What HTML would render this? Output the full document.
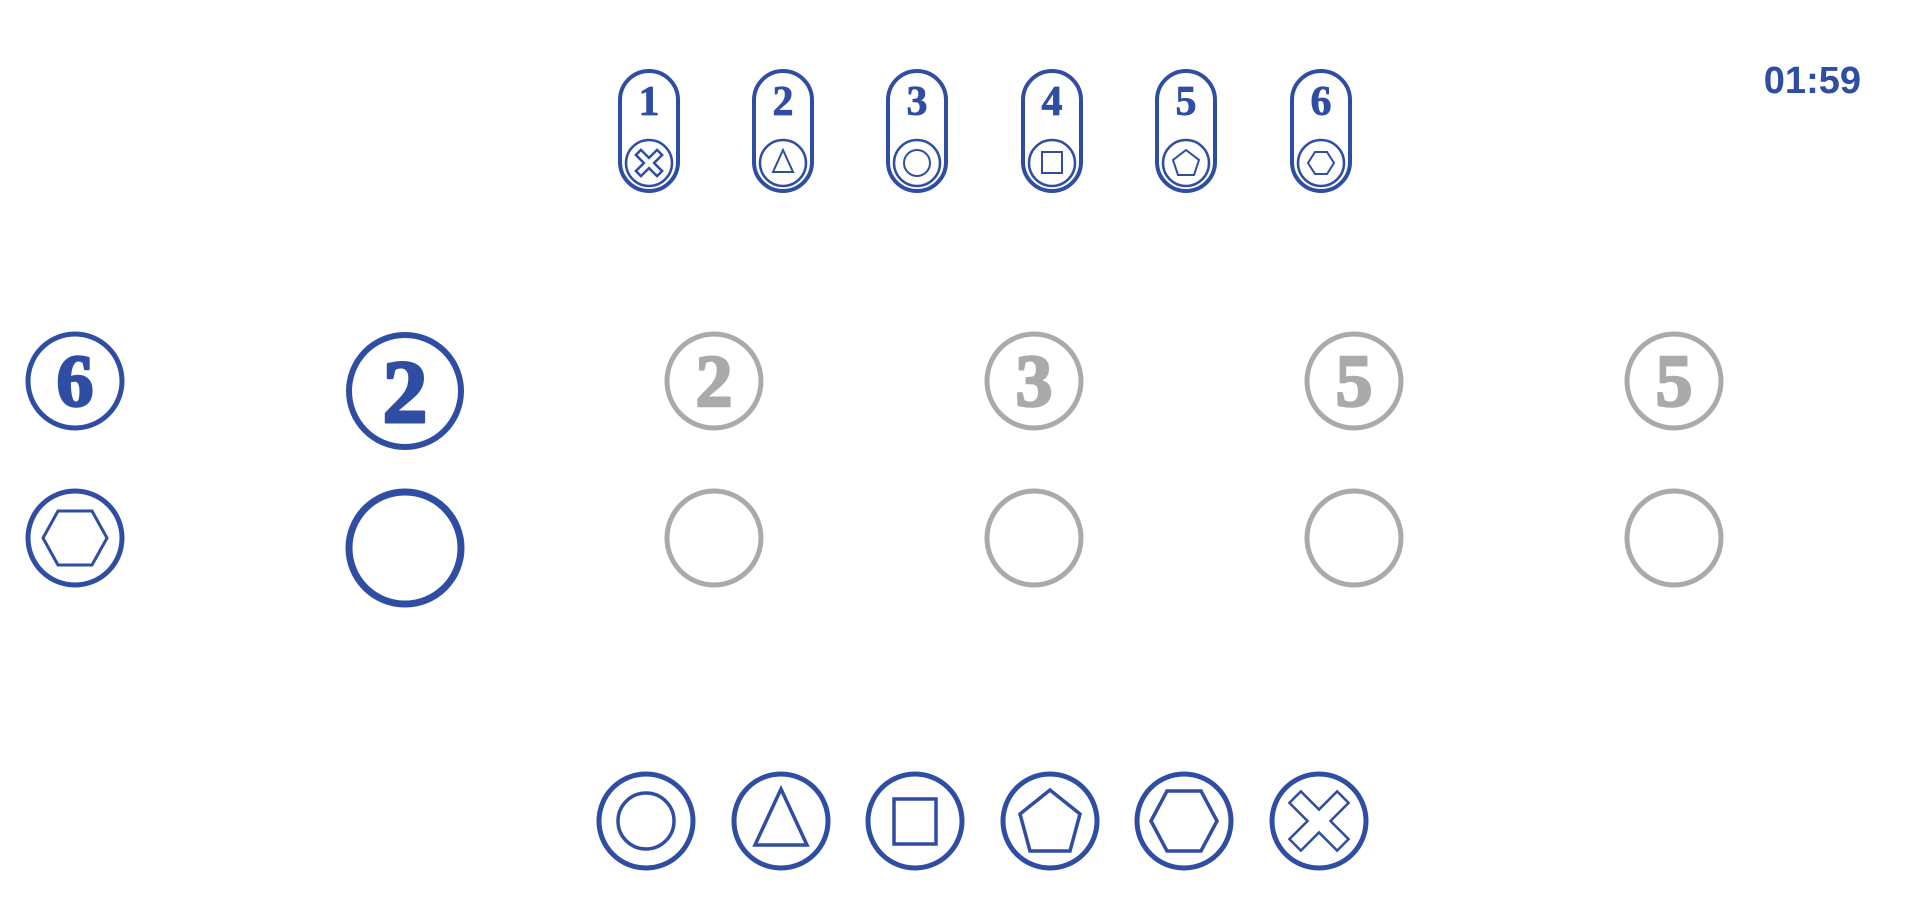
<!DOCTYPE html>
<html><head><meta charset="utf-8"><style>
html,body{margin:0;padding:0;background:#fff;width:1908px;height:920px;overflow:hidden}
svg{display:block}
.n{font-family:"Liberation Serif",serif;font-weight:bold;text-anchor:middle;stroke-linejoin:round}
</style></head><body>
<svg width="1908" height="920" viewBox="0 0 1908 920" xmlns="http://www.w3.org/2000/svg">
<defs>
<g id="x"><polygon transform="rotate(45)" points="-0.3,-1.25 0.3,-1.25 0.3,-0.3 1.25,-0.3 1.25,0.3 0.3,0.3 0.3,1.25 -0.3,1.25 -0.3,0.3 -1.25,0.3 -1.25,-0.3 -0.3,-0.3" fill="none" stroke="#2f4ea3" stroke-width="2.5" vector-effect="non-scaling-stroke"/></g>
</defs>

<text x="1861" y="93" font-family="Liberation Sans,sans-serif" font-weight="bold" font-size="38" fill="#2f4ea3" text-anchor="end">01:59</text>

<g fill="none" stroke="#2f4ea3" stroke-width="4">
<rect x="620" y="71" width="58" height="120" rx="29"/>
<rect x="754" y="71" width="58" height="120" rx="29"/>
<rect x="888" y="71" width="58" height="120" rx="29"/>
<rect x="1023" y="71" width="58" height="120" rx="29"/>
<rect x="1157" y="71" width="58" height="120" rx="29"/>
<rect x="1292" y="71" width="58" height="120" rx="29"/>
</g>
<g fill="none" stroke="#2f4ea3" stroke-width="2.5">
<circle cx="649" cy="163" r="23"/><circle cx="783" cy="163" r="23"/><circle cx="917" cy="163" r="23"/>
<circle cx="1052" cy="163" r="23"/><circle cx="1186" cy="163" r="23"/><circle cx="1321" cy="163" r="23"/>
</g>
<g fill="#2f4ea3" stroke="#2f4ea3" stroke-width="0.8">
<text class="n" font-size="42" x="649" y="115">1</text><text class="n" font-size="42" x="783" y="115">2</text><text class="n" font-size="42" x="917" y="115">3</text>
<text class="n" font-size="42" x="1052" y="115">4</text><text class="n" font-size="42" x="1186" y="115">5</text><text class="n" font-size="42" x="1321" y="115">6</text>
</g>
<use href="#x" transform="translate(649,163) scale(12)"/>
<g fill="none" stroke="#2f4ea3" stroke-width="2">
<polygon points="783,150 793,172 773,172"/>
<circle cx="917" cy="163" r="13"/>
<rect x="1042" y="152" width="20" height="21"/>
<polygon points="1186,150 1199,160 1194,175 1178,175 1173,160"/>
<polygon points="1308,163 1315,152 1327,152 1334,163 1327,174 1315,174"/>
</g>

<g fill="none" stroke-width="5">
<circle cx="75" cy="381" r="47" stroke="#2f4ea3"/>
<circle cx="405" cy="391" r="56" stroke="#2f4ea3" stroke-width="6"/>
<circle cx="714" cy="381" r="47" stroke="#aaaaaa"/>
<circle cx="1034" cy="381" r="47" stroke="#aaaaaa"/>
<circle cx="1354" cy="381" r="47" stroke="#aaaaaa"/>
<circle cx="1674" cy="381" r="47" stroke="#aaaaaa"/>
<circle cx="75" cy="538" r="47" stroke="#2f4ea3"/>
<circle cx="405" cy="548" r="56" stroke="#2f4ea3" stroke-width="7"/>
<circle cx="714" cy="538" r="47" stroke="#aaaaaa"/>
<circle cx="1034" cy="538" r="47" stroke="#aaaaaa"/>
<circle cx="1354" cy="538" r="47" stroke="#aaaaaa"/>
<circle cx="1674" cy="538" r="47" stroke="#aaaaaa"/>
</g>
<text class="n" x="75" y="406" font-size="74" fill="#2f4ea3" stroke="#2f4ea3" stroke-width="2.5">6</text>
<text class="n" x="405" y="422" font-size="90" fill="#2f4ea3" stroke="#2f4ea3" stroke-width="3">2</text>
<text class="n" x="714" y="406" font-size="74" fill="#aaaaaa" stroke="#aaaaaa" stroke-width="2.5">2</text>
<text class="n" x="1034" y="406" font-size="74" fill="#aaaaaa" stroke="#aaaaaa" stroke-width="2.5">3</text>
<text class="n" x="1354" y="406" font-size="74" fill="#aaaaaa" stroke="#aaaaaa" stroke-width="2.5">5</text>
<text class="n" x="1674" y="406" font-size="74" fill="#aaaaaa" stroke="#aaaaaa" stroke-width="2.5">5</text>
<polygon points="43,538 58,511 92,511 107,538 92,565 58,565" fill="none" stroke="#2f4ea3" stroke-width="3"/>

<g fill="none" stroke="#2f4ea3" stroke-width="5">
<circle cx="646" cy="821" r="47"/><circle cx="781" cy="821" r="47"/><circle cx="915" cy="821" r="47"/>
<circle cx="1050" cy="821" r="47"/><circle cx="1184" cy="821" r="47"/><circle cx="1319" cy="821" r="47"/>
</g>
<g fill="none" stroke="#2f4ea3" stroke-width="3.5">
<circle cx="646" cy="821" r="28"/>
<polygon points="781,789 807,845 755,845"/>
<rect x="894" y="799" width="42" height="45"/>
<polygon points="1050,790 1080,814 1070,851 1030,851 1020,814"/>
<polygon points="1151,821 1167,791 1201,791 1217,821 1201,851 1167,851"/>
</g>
<use href="#x" transform="translate(1319,821) scale(27)"/>
</svg>
</body></html>
